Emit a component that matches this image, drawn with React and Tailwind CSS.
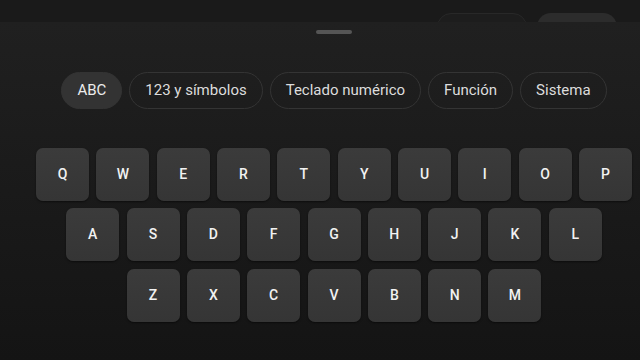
const CHIPS = ['ABC', '123 y símbolos', 'Teclado numérico', 'Función', 'Sistema']

const ROWS = [
  ['Q', 'W', 'E', 'R', 'T', 'Y', 'U', 'I', 'O', 'P'],
  ['A', 'S', 'D', 'F', 'G', 'H', 'J', 'K', 'L'],
  ['Z', 'X', 'C', 'V', 'B', 'N', 'M'],
]

function Key({ label }) {
  return (
    <button
      type="button"
      className="w-[53px] h-[53px] rounded-[7px] bg-gradient-to-b from-[#3b3b3b] to-[#353535] text-[#f2f2f2] text-[14px] font-medium flex items-center justify-center shadow-[0_1px_2px_rgba(0,0,0,0.5)]"
    >
      {label}
    </button>
  )
}

export default function App() {
  return (
    <div
      className="w-[640px] h-[360px] overflow-hidden bg-[#1a1a1a] flex flex-col"
      style={{ fontFamily: 'Roboto, "Noto Sans", sans-serif' }}
    >
      {/* strip of the screen behind the panel */}
      <div className="h-[22px] shrink-0 overflow-hidden flex items-start pt-[13px] pl-[437px] gap-[10px]">
        <div className="w-[90px] h-[30px] shrink-0 rounded-[14px] bg-[#1d1d1d] border border-[#282828]" />
        <div className="w-[80px] h-[30px] shrink-0 rounded-[14px] bg-[#2c2c2c]" />
      </div>

      <div className="flex-1 bg-gradient-to-b from-[#202020] via-[#1a1a1a] to-[#141414] flex flex-col">
        <div className="flex justify-center pt-[8px] pl-[28px]">
          <div className="w-[36px] h-[4px] rounded-full bg-[#555555]" />
        </div>

        <div className="flex justify-center gap-[7px] pl-[28px] mt-[38px]">
          {CHIPS.map((c, i) => (
            <div
              key={c}
              className={
                i === 0
                  ? 'h-[37px] px-[15px] rounded-full bg-[#333333] border border-[#333333] text-[#ececec] text-[15px] flex items-center'
                  : 'h-[37px] px-[15px] rounded-full border border-[#343434] text-[#dcdcdc] text-[15px] flex items-center'
              }
            >
              {c}
            </div>
          ))}
        </div>

        <div className="flex flex-col gap-[7.33px] pl-[28px] mt-[39px]">
          {ROWS.map((row, r) => (
            <div key={r} className="flex justify-center gap-[7.33px]">
              {row.map(k => (
                <Key key={k} label={k} />
              ))}
            </div>
          ))}
        </div>
      </div>
    </div>
  )
}
